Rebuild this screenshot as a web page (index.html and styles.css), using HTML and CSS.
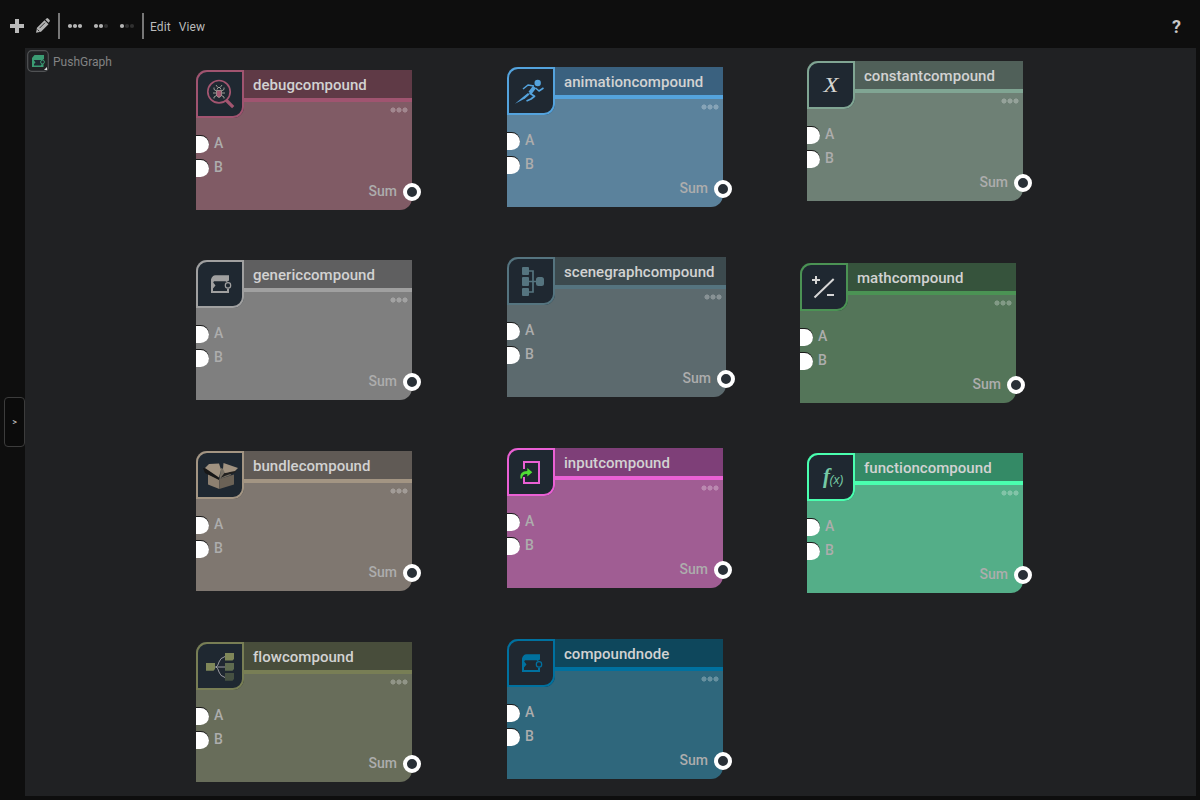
FILE: index.html
```
<!DOCTYPE html>
<html lang="en">
<head>
<meta charset="utf-8">
<title>PushGraph</title>
<link rel="stylesheet" href="styles.css">
</head>
<body>
<svg class="defs" width="0" height="0">
  <symbol id="compound" viewBox="0 0 48 48">
    <path fill="currentColor" fill-rule="evenodd" d="M15 19.500Q16 15.500 19.500 15.300H33V20.500L30.500 22L29.500 21.300H18L17.200 22.500L19.500 25.500L17 28.500V31H31V29L33 28.500V33H15Z"/>
    <circle cx="32" cy="25.400" r="2.700" fill="none" stroke="currentColor" stroke-width="1.200"/>
  </symbol>
</svg>
<header class="toolbar">
  <svg class="tools" width="144" height="30" viewBox="0 0 144 30">
    <path d="M15 7h4v5h5v4h-5v5h-4v-5h-5v-4h5z" fill="#b9b9b9"/>
    <path d="M36 20.800l1-5 7.500-7.500 4 4-7.500 7.500z" fill="#b4b4b4"/>
    <path d="M45.300 7.500l1.200-1.100q.8-.6 1.600.1l1.500 1.500q.6.800 0 1.500l-1.100 1.300z" fill="#b4b4b4"/>
    <path d="M39.500 16.200l5.500-5.500M37.500 17.500l1.800 1.800" stroke="#222" stroke-width=".9"/>
    <path d="M59 1v26M143 1v26" stroke="#777" stroke-width="2"/>
    <g fill="#b5b5b5"><circle cx="70" cy="14" r="2.100"/><circle cx="75" cy="14" r="2.100"/><circle cx="80" cy="14" r="2.100"/><circle cx="96" cy="14" r="2.100"/><circle cx="101" cy="14" r="2.100"/><circle cx="122" cy="14" r="2.100"/></g>
    <g fill="#303030"><circle cx="106" cy="14" r="2.100"/><circle cx="127" cy="14" r="2.100"/><circle cx="132" cy="14" r="2.100"/></g>
  </svg>
  <nav class="menu"><span>Edit</span><span>View</span></nav>
  <span class="help">?</span>
</header>
<div class="workspace">
  <aside class="rail"><button class="expand">&gt;</button></aside>
  <main class="canvas">
    <div class="crumb">
      <svg width="22" height="22" viewBox="0 0 22 22"><rect x=".7" y=".7" width="20.600" height="20.600" rx="4" fill="#202224" stroke="#505254" stroke-width="1.200"/><path d="M6 9h10v7H6z" fill="#1f2831"/><path fill="#3b9b73" fill-rule="evenodd" d="M5 8L7.500 5H17V9L15.500 10H7V10.500L8.500 12.500 7 14V15.500H14V14.500L16.500 14V17H5Z"/><circle cx="15.500" cy="12" r="1.900" fill="none" stroke="#3b9b73"/><path d="M20 17v3h-3z" fill="#ddd"/></svg>
      <span>PushGraph</span>
    </div>

    <section class="node debug">
      <svg class="icon" viewBox="0 0 48 48"><circle cx="23" cy="21.700" r="11.200" fill="none" stroke="#a35570" stroke-width="1.700"/><path d="M30 30l7.200 7.200" stroke="#a35570" stroke-width="3.200"/><path d="M20.500 20.500h5v5l-1.500 1.700h-2L20.500 25.500z" fill="#a35570" stroke="#bdb9ae" stroke-width=".6"/><path d="M21 19.500l1-2h2l1 2M21.500 17l-1.500-2M24.500 17l1.500-2M20.500 21L18 19.500V17.500M20 23h-3M20.500 25.500L18 27v1.500M25.500 21l2.500-1.500V17.500M26 23h3M25.500 25.500L28 27v1.500" fill="none" stroke="#bdb9ae" stroke-width=".8"/></svg>
      <h2>debugcompound</h2><i class="dots"></i><b class="in a">A</b><b class="in b">B</b><b class="out">Sum</b>
    </section>
    <section class="node animation">
      <svg class="icon" viewBox="0 0 48 48"><circle cx="30.700" cy="16" r="3.200" fill="#54a3dd"/><g fill="none" stroke="#54a3dd" stroke-linejoin="round"><path d="M27.500 20L23 26" stroke-width="3.800"/><path d="M27 19l-6-1-5 4M28.500 21l3.500 3 4.500-3" stroke-width="1.600"/><path d="M22.500 26l5 3.200-3.500 2.800-4.500 2" stroke-width="1.800"/></g><path d="M21 26l-5 4L8 36.800l10-5.300 4.500-4z" fill="#54a3dd"/></svg>
      <h2>animationcompound</h2><i class="dots"></i><b class="in a">A</b><b class="in b">B</b><b class="out">Sum</b>
    </section>
    <section class="node constant">
      <svg class="icon" viewBox="0 0 48 48"><text class="glyph-x" x="16.500" y="31" textLength="15" lengthAdjust="spacingAndGlyphs">X</text></svg>
      <h2>constantcompound</h2><i class="dots"></i><b class="in a">A</b><b class="in b">B</b><b class="out">Sum</b>
    </section>
    <section class="node generic">
      <svg class="icon"><use href="#compound"/></svg>
      <h2>genericcompound</h2><i class="dots"></i><b class="in a">A</b><b class="in b">B</b><b class="out">Sum</b>
    </section>
    <section class="node scenegraph">
      <svg class="icon" viewBox="0 0 48 48"><g fill="#55747f"><rect x="15" y="10" width="7" height="8" rx="1"/><rect x="15" y="20" width="7" height="9" rx="1"/><rect x="15" y="31" width="7" height="8" rx="1"/><rect x="29" y="20" width="8" height="9" rx="2.500"/></g><path d="M22 14h4v21h-4M22 24.500h8" fill="none" stroke="#55747f" stroke-width="1.700"/></svg>
      <h2>scenegraphcompound</h2><i class="dots"></i><b class="in a">A</b><b class="in b">B</b><b class="out">Sum</b>
    </section>
    <section class="node math">
      <svg class="icon" viewBox="0 0 48 48"><path d="M12 17h8M16 13v8M14.500 34.500L33.700 16M27 32h7" stroke="#d6d6d6" stroke-width="2"/></svg>
      <h2>mathcompound</h2><i class="dots"></i><b class="in a">A</b><b class="in b">B</b><b class="out">Sum</b>
    </section>
    <section class="node bundle">
      <svg class="icon" viewBox="0 0 48 48"><path d="M12 23L23.300 28V38L12 33.500z" fill="#8d8070"/><path d="M23.300 28L38 23.500V33.500L23.300 38z" fill="#6b6256"/><path d="M25 17l8 3 2 4-11.500 4z" fill="#777064"/><path d="M7 17l4.500 1 11.500 8v3L9 22z" fill="#171717"/><path d="M9 17l4-4 10-.500 2 6-2 8z" fill="#a09280"/><path d="M24.500 27l4-5 5-1 7-2-1.500 2.500-9 3z" fill="#22211f"/><path d="M27.500 12l14.500 5-3 3-10 2-2-4z" fill="#a09280"/></svg>
      <h2>bundlecompound</h2><i class="dots"></i><b class="in a">A</b><b class="in b">B</b><b class="out">Sum</b>
    </section>
    <section class="node input">
      <svg class="icon" viewBox="0 0 48 48"><path d="M17 21v-7h15v21H17v-6" fill="none" stroke="#ea60d4" stroke-width="2"/><path d="M13.300 30.500q-1-7.500 7-7.500v-3l5 4.300-5 4.300v-2.600q-5-.500-5.300 4.500z" fill="#50dd35"/></svg>
      <h2>inputcompound</h2><i class="dots"></i><b class="in a">A</b><b class="in b">B</b><b class="out">Sum</b>
    </section>
    <section class="node function">
      <svg class="icon" viewBox="0 0 48 48"><text class="glyph-f" x="16" y="30">f</text><text class="glyph-arg" x="22.500" y="31">(x)</text></svg>
      <h2>functioncompound</h2><i class="dots"></i><b class="in a">A</b><b class="in b">B</b><b class="out">Sum</b>
    </section>
    <section class="node flow">
      <svg class="icon" viewBox="0 0 48 48"><path d="M19 25h10M20 25q2-1 3-5t6-5.500M20 25q2 1 3 5t6 5.500" fill="none" stroke="#a7a6ad" stroke-width=".9"/><path d="M10 21h9v6l-1.500 1.700H10zM29 11h9v6l-1.500 1.500H29z" fill="#7f8759"/><path d="M29 21h9v6l-1.500 1.700H29z" fill="#5f6c50"/><path d="M29 31h9v6l-1.500 1.700H29z" fill="#465142"/></svg>
      <h2>flowcompound</h2><i class="dots"></i><b class="in a">A</b><b class="in b">B</b><b class="out">Sum</b>
    </section>
    <section class="node basic">
      <svg class="icon"><use href="#compound"/></svg>
      <h2>compoundnode</h2><i class="dots"></i><b class="in a">A</b><b class="in b">B</b><b class="out">Sum</b>
    </section>
  </main>
</div>
</body>
</html>
```
FILE: styles.css
```
*, *::before, *::after { box-sizing: border-box; }
html { background: #0e0e0e; }
body { margin: 0; width: 1200px; height: 800px; display: flex; flex-direction: column; overflow: hidden; background: #0e0e0e; font-family: Roboto, sans-serif; }
.defs { position: absolute; }
.toolbar { height: 48px; display: flex; align-items: flex-start; padding: 12px 19px 0 0; color: #bbb; }
.tools { flex: none; }
.menu { display: flex; gap: 8px; margin-left: 6px; font-size: 12px; line-height: 30px; letter-spacing: .1px; }
.help { margin-left: auto; font-size: 18px; font-weight: 700; line-height: 29px; color: #c8c8c8; }
.workspace { flex: 1; display: flex; padding: 0 4px 4px 0; }
.rail { width: 25px; padding: 349px 0 0 4px; }
.expand { display: block; width: 21px; height: 50px; padding: 0; border: 1px solid #3c3c3c; border-radius: 4px; background: #0b0b0b; color: #ccc; font: 9px Roboto, sans-serif; }
.canvas { position: relative; flex: 1; background: #202123; }
.crumb { display: flex; gap: 4px; padding: 2px 0 0 2px; color: #828384; font-size: 12px; line-height: 24px; letter-spacing: 0; }

.node { position: absolute; width: 216px; height: 140px; padding-left: 48px; background: var(--body); border-radius: 11px 0 12px 0; }
.node h2 { margin: 0; height: 32px; padding-left: 9px; border-bottom: 4px solid var(--line); background: var(--head); color: #d2d2d2; font-size: 15px; font-weight: 500; line-height: 30px; letter-spacing: .04px; }
.icon { position: absolute; left: 0; top: 0; width: 48px; height: 48px; border-radius: 11px 0 11px 0; background: #1f2831; box-shadow: inset 0 0 0 2px var(--line); color: var(--line); }
.dots { position: absolute; right: 4.5px; top: 37px; width: 18px; height: 6px; background: radial-gradient(circle at 3px 3px, rgba(255,255,255,.27) 2.2px, transparent 2.900px) 0 0 / 6px 6px; }
.in { position: absolute; left: 0; height: 17px; padding-left: 18px; color: #adadad; font-size: 14px; font-weight: 500; line-height: 14px; }
.in::before { content: ""; position: absolute; left: 0; top: 0; width: 13px; height: 17px; background: #fff; border-radius: 0 9px 9px 0; box-shadow: 0 -1px #1b1b1b; }
.a { top: 66px; }
.b { top: 90px; }
.out { position: absolute; right: 15px; top: 113px; color: #adadad; font-size: 14px; font-weight: 500; line-height: 17px; }
.out::after { content: ""; position: absolute; left: calc(100% + 6px); top: 0; width: 18px; height: 18px; border: 4px solid #fff; border-radius: 50%; background: #293037; }

.glyph-x { font: italic 20px "Liberation Serif", serif; fill: #d5d5d0; }
.glyph-f { font: italic bold 21px "Liberation Serif", serif; fill: #75c9a5; }
.glyph-arg { font: italic 12px "Liberation Sans", sans-serif; fill: #75c9a5; }

.debug { left: 171px; top: 22px; --head: #5f3a46; --line: #a05470; --body: #805b65; }
.animation { left: 482px; top: 19px; --head: #3a617f; --line: #54a3dd; --body: #5b829c; }
.constant { left: 782px; top: 13px; --head: #506059; --line: #80a593; --body: #6e8075; }
.generic { left: 171px; top: 212px; --head: #5f5f60; --line: #a0a0a0; --body: #7f7f7f; }
.scenegraph { left: 482px; top: 209px; width: 219px; --head: #3c4a4e; --line: #55747f; --body: #5c6a6e; }
.math { left: 775px; top: 215px; --head: #36533c; --line: #4b9354; --body: #547559; }
.bundle { left: 171px; top: 403px; --head: #605a55; --line: #a39583; --body: #7f7770; }
.input { left: 482px; top: 400px; --head: #7e3f78; --line: #ea60d4; --body: #a05d93; }
.function { left: 782px; top: 405px; --head: #348a66; --line: #4affaf; --body: #54ae88; }
.flow { left: 171px; top: 594px; --head: #484d3b; --line: #787e55; --body: #686d5a; }
.basic { left: 482px; top: 591px; --head: #0e475c; --line: #00719f; --body: #2f677c; }
```
